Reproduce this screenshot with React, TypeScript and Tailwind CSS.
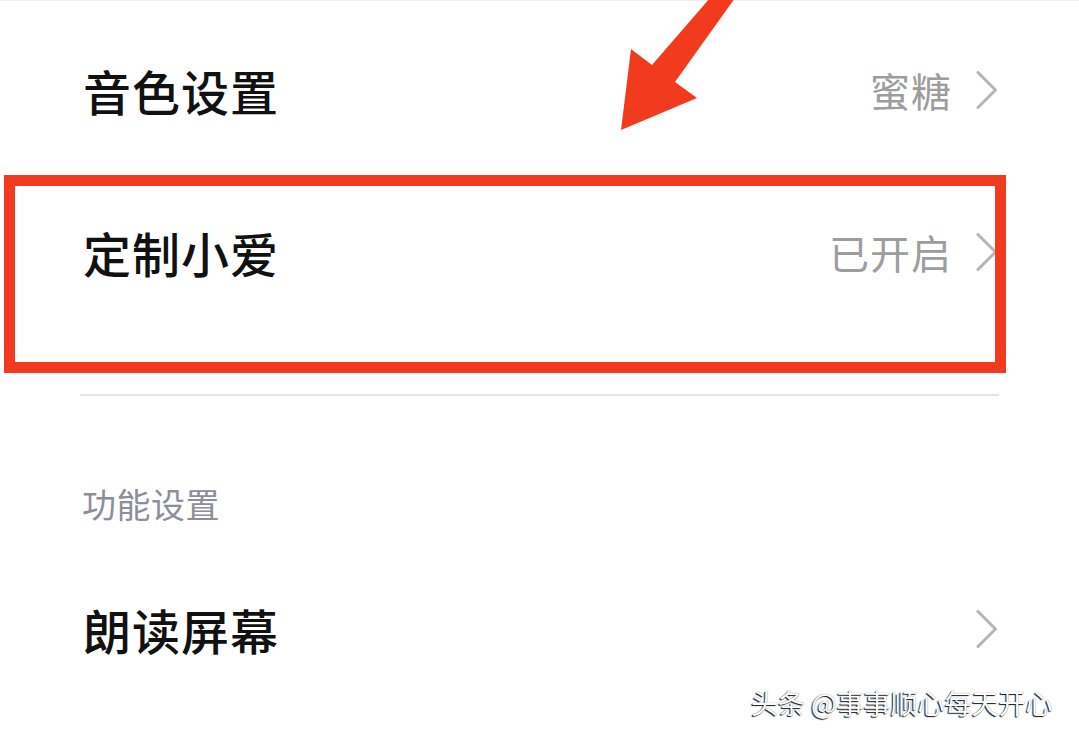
import React from "react";

const font = { fontFamily: '"Noto Sans CJK SC", "Noto Sans", sans-serif' };

function Chevron() {
  return (
    <svg width="22" height="38" viewBox="0 0 22 38" className="shrink-0">
      <polyline
        points="2,1.5 19.5,19 2,36.5"
        fill="none"
        stroke="#b5b5b5"
        strokeWidth="3"
        strokeLinecap="round"
        strokeLinejoin="round"
      />
    </svg>
  );
}

function Row({ title, value, h }: { title: string; value?: string; h: string }) {
  return (
    <div className={`flex items-center justify-between pl-[83px] pr-[81px] ${h}`}>
      <span className="text-[48px] leading-none font-medium text-[#111111] tracking-[1px]">{title}</span>
      <div className="flex items-center gap-[24px]">
        {value && <span className="text-[40px] leading-none text-[#9d9d9d] tracking-[1px]">{value}</span>}
        <Chevron />
      </div>
    </div>
  );
}

export default function App() {
  return (
    <div className="relative w-[1079px] h-[740px] overflow-hidden bg-white" style={font}>
      <div className="h-px bg-[#eeeeee]" />
      <Row title="音色设置" value="蜜糖" h="h-[187px] pb-[9px]" />
      <Row title="定制小爱" value="已开启" h="h-[136px] pb-[8px]" />
      <div className="mt-[70px] mx-[80px] h-[2px] bg-[#e6e6e6]" />
      <div className="mt-[88px] pl-[82px] h-[40px] flex items-center">
        <span className="text-[34px] leading-none text-[#8c8e9a] tracking-[0.5px]">功能设置</span>
      </div>
      <div className="mt-[48px]">
        <Row title="朗读屏幕" h="h-[120px] pb-[6px]" />
      </div>

      {/* red highlight box */}
      <div className="absolute left-[4px] top-[175px] w-[1002px] h-[198px] border-[11px] border-[#f23a1e]" />

      {/* red arrow */}
      <svg className="absolute left-0 top-0" width="1079" height="200" viewBox="0 0 1079 200">
        <polygon
          points="710,-2 735,-2 675,82 697,98 621,130 631,49 652,65"
          fill="#f23a1e"
        />
      </svg>

      {/* watermark */}
      <div
        className="absolute left-[751px] top-[686px] text-[27px] leading-[34px] text-white whitespace-nowrap"
        style={{ textShadow: "-1px 1px 1px rgba(0,0,0,0.9), 0 0 1px rgba(0,0,0,0.6)" }}
      >
        头条 @事事顺心每天开心
      </div>
    </div>
  );
}
